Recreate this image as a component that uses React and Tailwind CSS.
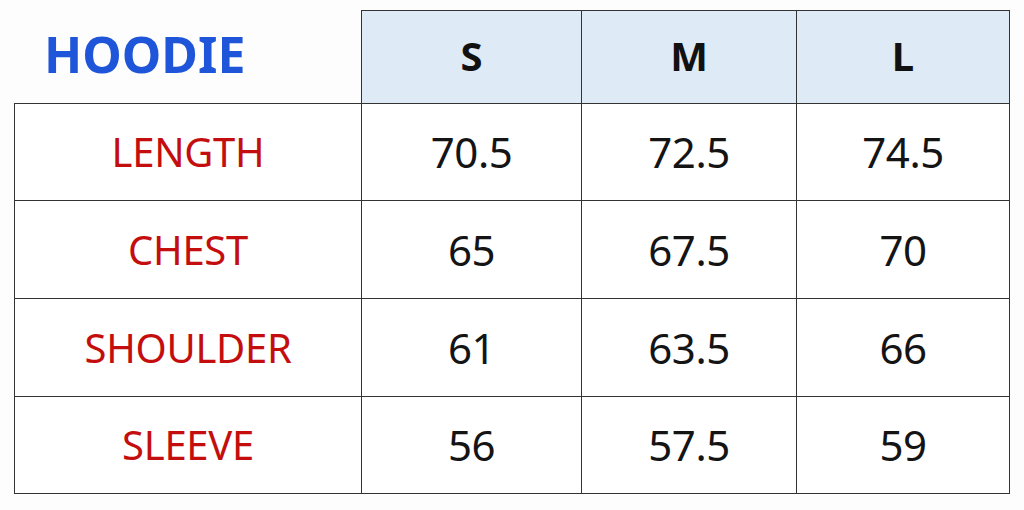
import React from "react";

const sizes = ["S", "M", "L"];

const rows = [
  { label: "LENGTH", values: ["70.5", "72.5", "74.5"], h: "h-[97px]" },
  { label: "CHEST", values: ["65", "67.5", "70"], h: "h-[98px]" },
  { label: "SHOULDER", values: ["61", "63.5", "66"], h: "h-[98px]" },
  { label: "SLEEVE", values: ["56", "57.5", "59"], h: "h-[97px]" },
];

const App = () => {
  return (
    <div
      className="w-[1024px] h-[510px] bg-[#fdfdfd] pt-[10px] pl-[14px]"
      style={{ fontFamily: '"Noto Sans", "Open Sans", sans-serif' }}
    >
      <div className="grid grid-cols-[347px_220px_215px_214px] w-[996px]">
        {/* header row */}
        <div className="h-[94px] flex items-center pl-[30px] border-b border-[#333]">
          <span className="text-[50px] font-bold text-[#1f55d9] leading-none mt-[-6px]">
            HOODIE
          </span>
        </div>
        {sizes.map((s, i) => (
          <div
            key={s}
            className={`h-[94px] flex items-center justify-center bg-[#deeaf6] border-t border-l border-b border-[#333] ${i === 2 ? "border-r" : ""}`}
          >
            <span className="text-[40px] font-bold text-[#111] leading-none mt-[-2px]">{s}</span>
          </div>
        ))}

        {/* body rows */}
        {rows.map((row) => (
          <React.Fragment key={row.label}>
            <div
              className={`${row.h} flex items-center justify-center border-l border-b border-[#333] bg-white`}
            >
              <span className="text-[40px] text-[#c40e0e] leading-none tracking-[-0.3px]">{row.label}</span>
            </div>
            {row.values.map((v, i) => (
              <div
                key={i}
                className={`${row.h} flex items-center justify-center border-l border-b border-[#333] bg-white ${i === 2 ? "border-r" : ""}`}
              >
                <span className="text-[42px] text-[#141414] leading-none tracking-[-0.5px]">{v}</span>
              </div>
            ))}
          </React.Fragment>
        ))}
      </div>
    </div>
  );
};

export default App;
